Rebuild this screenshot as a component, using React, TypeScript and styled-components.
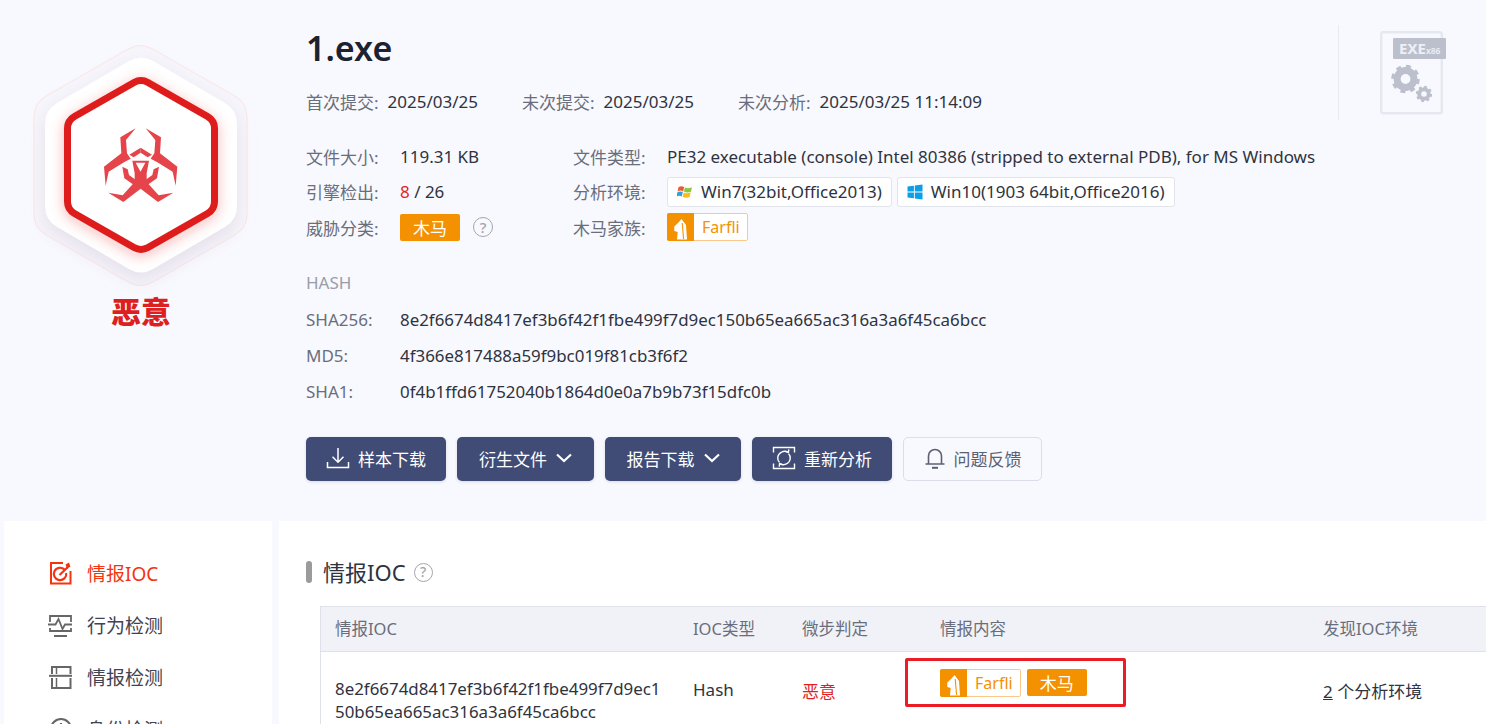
import React from "react";
import styled, { createGlobalStyle } from "styled-components";

const GlobalStyle = createGlobalStyle`
  html, body {
    margin: 0;
    height: 724px;
    overflow: hidden;
    background: #f8f9fe;
    font-family: "Noto Sans", "Noto Sans CJK SC", sans-serif;
    color: #2f3340;
  }
`;

const Page = styled.div`
  width: 1486px;
  height: 724px;
  overflow: hidden;
`;

const Header = styled.header`
  display: flex;
  height: 521px;
`;

const Verdict = styled.div`
  width: 282px;
  flex: none;
  padding-top: 30px;
  text-align: center;
`;

const BadgeSvg = styled.svg`
  display: block;
  width: 282px;
  height: 265px;
`;

const VerdictText = styled.div`
  margin-top: -1px;
  font-size: 30px;
  line-height: 36px;
  font-weight: 900;
  color: #de1f1f;
`;

const Info = styled.div`
  flex: 1;
  min-width: 0;
  padding: 24px 0 0 24px;
  position: relative;
`;

const Title = styled.h1`
  margin: 0;
  font-size: 34px;
  line-height: 48px;
  font-weight: 600;
  color: #1d2230;
`;

const MetaRow = styled.div`
  display: flex;
  margin-top: 17px;
  height: 24px;
  align-items: center;
  font-size: 17px;
`;

const MetaItem = styled.div`
  display: flex;
  align-items: center;
  gap: 9px;
  margin-right: 44px;
  white-space: nowrap;
`;

const Label = styled.span`
  color: #6a6e7c;
  white-space: nowrap;
`;

const Value = styled.span`
  color: #2f3340;
  white-space: nowrap;
`;

const HashValue = styled(Value)`
  font-size: 16.9px;
`;

const Danger = styled.span`
  color: #e01f1f;
`;

const InfoGrid = styled.div`
  display: grid;
  grid-template-columns: 94px 173px 94px 1fr;
  grid-auto-rows: 35.5px;
  margin-top: 25.5px;
  align-items: center;
  font-size: 17px;
`;

const Inline = styled.div`
  display: flex;
  align-items: center;
  gap: 5px;
`;

const EnvTag = styled.span`
  display: inline-flex;
  align-items: center;
  gap: 8px;
  height: 30px;
  box-sizing: border-box;
  padding: 0 9px;
  background: #fff;
  border: 1px solid #e2e4ec;
  border-radius: 3px;
  white-space: nowrap;
`;

const ThreatTag = styled.span`
  display: inline-flex;
  align-items: center;
  justify-content: center;
  width: 60px;
  height: 27px;
  border-radius: 2px;
  background: #f39100;
  color: #fff;
  font-size: 17px;
`;

const Help = styled.span<{ $size: number }>`
  display: inline-flex;
  align-items: center;
  justify-content: center;
  width: ${(p) => p.$size}px;
  height: ${(p) => p.$size}px;
  margin-left: 8px;
  border: 1.5px solid #a3a6ad;
  border-radius: 50%;
  box-sizing: border-box;
  color: #a3a6ad;
  font-size: ${(p) => p.$size - 5}px;
  line-height: 1;
  font-weight: 500;
`;

const FamilyTag = styled.span`
  display: inline-flex;
  align-items: center;
  box-sizing: border-box;
  height: 28px;
  border: 1px solid #f8c98a;
  border-radius: 2px;
  background: #fff;
  color: #f39100;
  white-space: nowrap;
`;

const FamilyMark = styled.span`
  display: inline-flex;
  width: 27px;
  height: 28px;
  margin: -1px 0 -1px -1px;
  border-radius: 2px 0 0 2px;
  background: #f39100;
`;

const FamilyName = styled.span`
  padding: 0 7px 0 8px;
  font-size: 16px;
`;

const HashList = styled.div`
  display: grid;
  grid-template-columns: 94px 1fr;
  grid-auto-rows: 36px;
  margin-top: 20px;
  align-items: center;
  font-size: 17px;
`;

const HashHeading = styled.div`
  grid-column: 1 / -1;
  margin-top: -2px;
  color: #9a9da8;
`;

const Actions = styled.div`
  display: flex;
  gap: 11px;
  margin-top: 28px;
`;

const ActionButton = styled.button<{ $width: number; $ghost?: boolean }>`
  display: inline-flex;
  align-items: center;
  justify-content: center;
  gap: 8px;
  width: ${(p) => p.$width}px;
  height: 44px;
  padding: 0 0 2px;
  border: ${(p) => (p.$ghost ? "1px solid #dcdde8" : "none")};
  border-radius: 5px;
  background: ${(p) => (p.$ghost ? "transparent" : "#404b76")};
  color: ${(p) => (p.$ghost ? "#5c6070" : "#fff")};
  box-shadow: ${(p) => (p.$ghost ? "none" : "0 1px 3px rgba(64,75,118,.18)")};
  font: inherit;
  font-size: 17px;
`;

const ChevronSvg = styled.svg`
  margin-left: 1px;
`;

const FileType = styled.div`
  position: absolute;
  top: 25px;
  left: 1056px;
  display: flex;
  width: 130px;
  height: 95px;
  border-left: 1px solid #e9eaf0;
`;

const FileSvg = styled.svg`
  margin: 6px 0 0 41px;
  width: 70px;
  height: 86px;
`;

const Body = styled.div`
  display: flex;
  gap: 7px;
  padding-left: 4px;
`;

const Sidebar = styled.nav`
  width: 268px;
  flex: none;
  height: 203px;
  padding-top: 26px;
  background: #fff;
`;

const NavItem = styled.div<{ $active?: boolean }>`
  display: flex;
  align-items: center;
  gap: 15px;
  height: 52px;
  padding-left: 44px;
  font-size: 19px;
  color: ${(p) => (p.$active ? "#f5340f" : "#3f4352")};
`;

const NavIcon = styled.svg`
  width: 24px;
  height: 24px;
  flex: none;
`;

const Content = styled.main`
  flex: 1;
  min-width: 0;
  height: 203px;
  padding: 34px 0 0 27px;
  background: #fff;
`;

const SectionHead = styled.div`
  display: flex;
  align-items: center;
  height: 34px;
  font-size: 22px;
  color: #2f3340;
`;

const SectionTitle = styled.span`
  padding-bottom: 2px;
`;

const SectionBar = styled.span`
  width: 6px;
  height: 22px;
  margin-right: 11px;
  border-radius: 3px;
  background: #9b9b9b;
`;

const Table = styled.div`
  margin: 17px 0 0 14px;
  width: 1200px;
  border-left: 1px solid #dfe1ea;
  font-size: 17px;
`;

const TableRow = styled.div<{ $head?: boolean }>`
  display: grid;
  grid-template-columns: 358px 109px 138px 383px 1fr;
  align-items: center;
  box-sizing: border-box;
  padding: ${(p) => (p.$head ? "0 0 3px 14px" : "0 0 0 14px")};
  height: ${(p) => (p.$head ? "46px" : "76px")};
  background: ${(p) => (p.$head ? "#f1f2f7" : "#fff")};
  border-top: ${(p) => (p.$head ? "1px solid #dfe1ea" : "none")};
  border-bottom: ${(p) => (p.$head ? "1px solid #dfe1ea" : "none")};
  color: ${(p) => (p.$head ? "#6a6e7c" : "#2f3340")};
  font-size: ${(p) => (p.$head ? "16.5px" : "17px")};
`;

const HashCell = styled.div`
  width: 330px;
  line-height: 23px;
  padding-top: 25px;
  font-size: 16.9px;
  align-self: start;
  word-break: break-all;
`;

const PlainCell = styled.div`
  align-self: start;
  padding-top: 26px;
`;

const TagsCell = styled.div`
  position: relative;
  align-self: start;
  display: flex;
  gap: 6px;
  padding-top: 17px;
`;

const Callout = styled.div`
  position: absolute;
  top: 6px;
  left: -35px;
  width: 221px;
  height: 49px;
  box-sizing: border-box;
  border: 3px solid #ec1c24;
  border-radius: 2px;
`;

const EnvCount = styled.span`
  text-decoration: underline;
`;

const HorseMark = () => (
  <svg width="27" height="28" viewBox="0 0 27 28">
    <path d="M14.5 6 19 12 20 26.5H10L10.7 19 7.3 18V13.5L11.5 9.5Z" fill="#fff" />
    <path d="M15.2 10 16.6 26" stroke="#f39100" strokeWidth="1.1" fill="none" />
  </svg>
);

const Family = () => (
  <FamilyTag>
    <FamilyMark>
      <HorseMark />
    </FamilyMark>
    <FamilyName>Farfli</FamilyName>
  </FamilyTag>
);

const Win7Icon = () => (
  <svg width="16" height="16" viewBox="0 0 16 16">
    <path d="M1.5 3.2C3.6 2 5.4 2.2 7.2 3.2L6 7.4C4.4 6.4 2.6 6.3.6 7.4Z" fill="#ea5a2c" />
    <path d="M8 3.4C10 4.5 12 4.5 15 3.2L13.9 7.7C11.4 8.8 9 8.7 6.9 7.6Z" fill="#8cc63f" />
    <path d="M.4 8.2C2.4 7.2 4.2 7.2 5.8 8.2L4.7 12.5C3 11.5 1.4 11.6-.4 12.5Z" fill="#2e9fe0" />
    <path d="M6.7 8.4C9 9.5 11.2 9.5 13.7 8.6L12.6 13C10.2 14.2 7.8 14 5.6 12.8Z" fill="#fbbc18" />
  </svg>
);

const Win10Icon = () => (
  <svg width="16" height="16" viewBox="0 0 16 16" fill="#0a9fe6">
    <path d="M.5 2.6 6.9 1.7V7.5H.5ZM7.8 1.6 15.5.5V7.5H7.8ZM.5 8.4H6.9V14.3L.5 13.4ZM7.8 8.4H15.5V15.5L7.8 14.4Z" />
  </svg>
);

const DownloadIcon = () => (
  <svg width="24" height="24" viewBox="0 0 24 24" fill="none" stroke="#fff" strokeWidth="1.5">
    <path d="M12 2V16M6.5 10.8 12 16.3 17.5 10.8M1.5 16V21.5H22.5V16" />
  </svg>
);

const ChevronIcon = () => (
  <ChevronSvg width="16" height="10" viewBox="0 0 16 10" fill="none" stroke="#fff" strokeWidth="2.2">
    <path d="M1 1.5 8 8 15 1.5" />
  </ChevronSvg>
);

const RefreshIcon = () => (
  <svg width="24" height="24" viewBox="0 0 24 24" fill="none" stroke="#fff" strokeWidth="1.4">
    <path d="M1.5 6.5V1.5H22.5V6.5M1.5 17.5V22.5H22.5V17.5" />
    <path d="M15.8 6.2A6.8 6.8 0 0 0 5.8 11C5.4 13.4 6.2 15 7.4 16.2" />
    <path d="M8.2 17.8A6.8 6.8 0 0 0 18.2 13C18.6 10.6 17.8 9 16.6 7.8" />
    <path d="M13.2 5.2 16.4 6.6 16.8 3.4M10.8 18.8 7.6 17.4 7.2 20.6" />
  </svg>
);

const BellIcon = () => (
  <svg width="22" height="24" viewBox="0 0 22 24" fill="none" stroke="#5c6070" strokeWidth="1.6">
    <path d="M4.5 17.5V10A6.5 6.5 0 0 1 17.5 10V17.5M1.5 18H20.5" />
    <path d="M8 21.8H14" strokeWidth="2" />
  </svg>
);

const IocIcon = () => (
  <NavIcon viewBox="0 0 24 24" fill="none" stroke="#f5340f" strokeWidth="2">
    <path d="M15 2H3V22.5H22.5V10" />
    <path d="M16.5 8.6A6.2 6.2 0 1 0 18.2 12" strokeWidth="2.2" />
    <path d="M11.5 14 19.5 6.5" strokeWidth="2.2" />
    <path d="M17.6 3.4 21 1.4 22.4 5.6 19 8Z" fill="#f5340f" stroke="none" />
  </NavIcon>
);

const BehaviorIcon = () => (
  <NavIcon viewBox="0 0 24 24" fill="none" stroke="#666" strokeWidth="1.8">
    <path d="M2 9V3H23V9M2 15V18H23V15" />
    <path d="M0 11.5H7.5L10.5 6 14.5 16 17 11.5H24.5" />
    <path d="M6 23H19" strokeWidth="2" />
  </NavIcon>
);

const IntelIcon = () => (
  <NavIcon viewBox="0 0 24 24" fill="none" stroke="#666" strokeWidth="2">
    <path d="M4 9V2H22.5V9M4 13V23H22.5V13" />
    <path d="M8.5 2V9M8.5 13V23" strokeWidth="1.5" />
    <path d="M1 10.8H24" />
  </NavIcon>
);

const IdentityIcon = () => (
  <NavIcon viewBox="0 0 24 24" fill="none" stroke="#666" strokeWidth="2">
    <circle cx="13" cy="12" r="10" />
    <path d="M13 6V12L17 15" />
  </NavIcon>
);

// half of the biohazard sign, the other half is mirrored
const BioHalf = () => (
  <>
    <path d="M137 25 91 52 94 100 42 140 47 197 56 155 102 127 122 116 111 100 108 60Z" />
    <path d="M152 83 118 104 131 112 152 98Z" />
    <path d="M97 140 103 175 132 195 138 180 117 165 113 148Z" />
  </>
);

const Biohazard = () => (
  <g fill="#e4444a" transform="translate(90 120) scale(.3333)">
    <BioHalf />
    <g transform="translate(304 0) scale(-1 1)">
      <BioHalf />
    </g>
    <path
      fillRule="evenodd"
      d="M127 122H177L170 160V186L206 226 250 218 204 246 152 206 100 246 55 218 98 226 134 186V160ZM137 128H166L151.5 155Z"
    />
  </g>
);

// hexagon outline with its corners cut by quadratic curves
const roundedHex = (pts: number[][], r: number) => {
  const n = pts.length;
  let d = "";
  pts.forEach((p, i) => {
    const prev = pts[(i + n - 1) % n];
    const next = pts[(i + 1) % n];
    const toward = (q: number[]) => {
      const len = Math.hypot(q[0] - p[0], q[1] - p[1]);
      return [p[0] + ((q[0] - p[0]) * r) / len, p[1] + ((q[1] - p[1]) * r) / len];
    };
    const a = toward(prev);
    const b = toward(next);
    d += `${i === 0 ? "M" : "L"}${a[0]} ${a[1]}Q${p[0]} ${p[1]} ${b[0]} ${b[1]}`;
  });
  return d + "Z";
};

const hex = (left: number, right: number, top: number, bottom: number, side: number) => {
  const mid = (left + right) / 2;
  return [
    [mid, top],
    [right, top + side],
    [right, bottom - side],
    [mid, bottom],
    [left, bottom - side],
    [left, top + side],
  ];
};

const Badge = () => (
  <BadgeSvg viewBox="0 30 282 265">
    <defs>
      <filter id="soft" x="-30%" y="-30%" width="160%" height="160%">
        <feDropShadow dx="0" dy="8" stdDeviation="9" floodColor="#c9b8cf" floodOpacity=".35" />
      </filter>
      <filter id="glow" x="-30%" y="-30%" width="160%" height="160%">
        <feDropShadow dx="0" dy="3" stdDeviation="7" floodColor="#e01f1f" floodOpacity=".28" />
      </filter>
    </defs>
    <path d={roundedHex(hex(34, 247, 42, 289, 61), 14)} fill="#f6f5fb" stroke="#fde3e3" strokeWidth="1" />
    <path d={roundedHex(hex(45, 237, 54, 276, 56), 14)} fill="#fff" filter="url(#soft)" />
    <path d={roundedHex(hex(67.5, 214.5, 78.5, 251.5, 42), 8)} fill="#fff" stroke="#de1a1a" strokeWidth="7" filter="url(#glow)" />
    <Biohazard />
  </BadgeSvg>
);

const Gear = ({ x, y, r }: { x: number; y: number; r: number }) => {
  const tooth = (2 * Math.PI * r * 0.87) / 16;
  return (
    <g fill="none" stroke="#bcc0cd">
      <circle cx={x} cy={y} r={r * 0.6} strokeWidth={r * 0.5} />
      <circle cx={x} cy={y} r={r * 0.87} strokeWidth={r * 0.3} strokeDasharray={`${tooth} ${tooth}`} />
    </g>
  );
};

const FileIcon = () => (
  <FileSvg viewBox="0 0 70 86">
    <rect x="1.2" y="1.2" width="60.6" height="81" rx="2" fill="none" stroke="#e6e8f1" strokeWidth="2.5" />
    <rect x="13" y="7" width="53" height="21" rx="1" fill="#bcc0cd" />
    <text x="19" y="23" fontFamily="Noto Sans" fontSize="15" fontWeight="700" fill="#eef0f6">EXE</text>
    <text x="46" y="23" fontFamily="Noto Sans" fontSize="8.5" fontWeight="600" fill="#eef0f6">x86</text>
    <Gear x={25.5} y={48} r={14} />
    <Gear x={44} y={63} r={8} />
  </FileSvg>
);

export default function App() {
  return (
    <Page>
      <GlobalStyle />
      <Header>
        <Verdict>
          <Badge />
          <VerdictText>恶意</VerdictText>
        </Verdict>
        <Info>
          <Title>1.exe</Title>
          <MetaRow>
            <MetaItem>
              <Label>首次提交:</Label>
              <Value>2025/03/25</Value>
            </MetaItem>
            <MetaItem>
              <Label>未次提交:</Label>
              <Value>2025/03/25</Value>
            </MetaItem>
            <MetaItem>
              <Label>未次分析:</Label>
              <Value>2025/03/25 11:14:09</Value>
            </MetaItem>
          </MetaRow>
          <InfoGrid>
            <Label>文件大小:</Label>
            <Value>119.31 KB</Value>
            <Label>文件类型:</Label>
            <Value>PE32 executable (console) Intel 80386 (stripped to external PDB), for MS Windows</Value>
            <Label>引擎检出:</Label>
            <Value>
              <Danger>8</Danger> / 26
            </Value>
            <Label>分析环境:</Label>
            <Inline>
              <EnvTag>
                <Win7Icon />
                Win7(32bit,Office2013)
              </EnvTag>
              <EnvTag>
                <Win10Icon />
                Win10(1903 64bit,Office2016)
              </EnvTag>
            </Inline>
            <Label>威胁分类:</Label>
            <Inline>
              <ThreatTag>木马</ThreatTag>
              <Help $size={20}>?</Help>
            </Inline>
            <Label>木马家族:</Label>
            <Inline>
              <Family />
            </Inline>
          </InfoGrid>
          <HashList>
            <HashHeading>HASH</HashHeading>
            <Label>SHA256:</Label>
            <HashValue>8e2f6674d8417ef3b6f42f1fbe499f7d9ec150b65ea665ac316a3a6f45ca6bcc</HashValue>
            <Label>MD5:</Label>
            <HashValue>4f366e817488a59f9bc019f81cb3f6f2</HashValue>
            <Label>SHA1:</Label>
            <HashValue>0f4b1ffd61752040b1864d0e0a7b9b73f15dfc0b</HashValue>
          </HashList>
          <Actions>
            <ActionButton $width={140}>
              <DownloadIcon />
              样本下载
            </ActionButton>
            <ActionButton $width={137}>
              衍生文件
              <ChevronIcon />
            </ActionButton>
            <ActionButton $width={136}>
              报告下载
              <ChevronIcon />
            </ActionButton>
            <ActionButton $width={140}>
              <RefreshIcon />
              重新分析
            </ActionButton>
            <ActionButton $width={139} $ghost>
              <BellIcon />
              问题反馈
            </ActionButton>
          </Actions>
          <FileType>
            <FileIcon />
          </FileType>
        </Info>
      </Header>
      <Body>
        <Sidebar>
          <NavItem $active>
            <IocIcon />
            情报IOC
          </NavItem>
          <NavItem>
            <BehaviorIcon />
            行为检测
          </NavItem>
          <NavItem>
            <IntelIcon />
            情报检测
          </NavItem>
          <NavItem>
            <IdentityIcon />
            身份检测
          </NavItem>
        </Sidebar>
        <Content>
          <SectionHead>
            <SectionBar />
            <SectionTitle>情报IOC</SectionTitle>
            <Help $size={19}>?</Help>
          </SectionHead>
          <Table>
            <TableRow $head>
              <span>情报IOC</span>
              <span>IOC类型</span>
              <span>微步判定</span>
              <span>情报内容</span>
              <span>发现IOC环境</span>
            </TableRow>
            <TableRow>
              <HashCell>8e2f6674d8417ef3b6f42f1fbe499f7d9ec150b65ea665ac316a3a6f45ca6bcc</HashCell>
              <PlainCell>Hash</PlainCell>
              <PlainCell>
                <Danger>恶意</Danger>
              </PlainCell>
              <TagsCell>
                <Callout />
                <Family />
                <ThreatTag>木马</ThreatTag>
              </TagsCell>
              <PlainCell>
                <EnvCount>2</EnvCount> 个分析环境
              </PlainCell>
            </TableRow>
          </Table>
        </Content>
      </Body>
    </Page>
  );
}
